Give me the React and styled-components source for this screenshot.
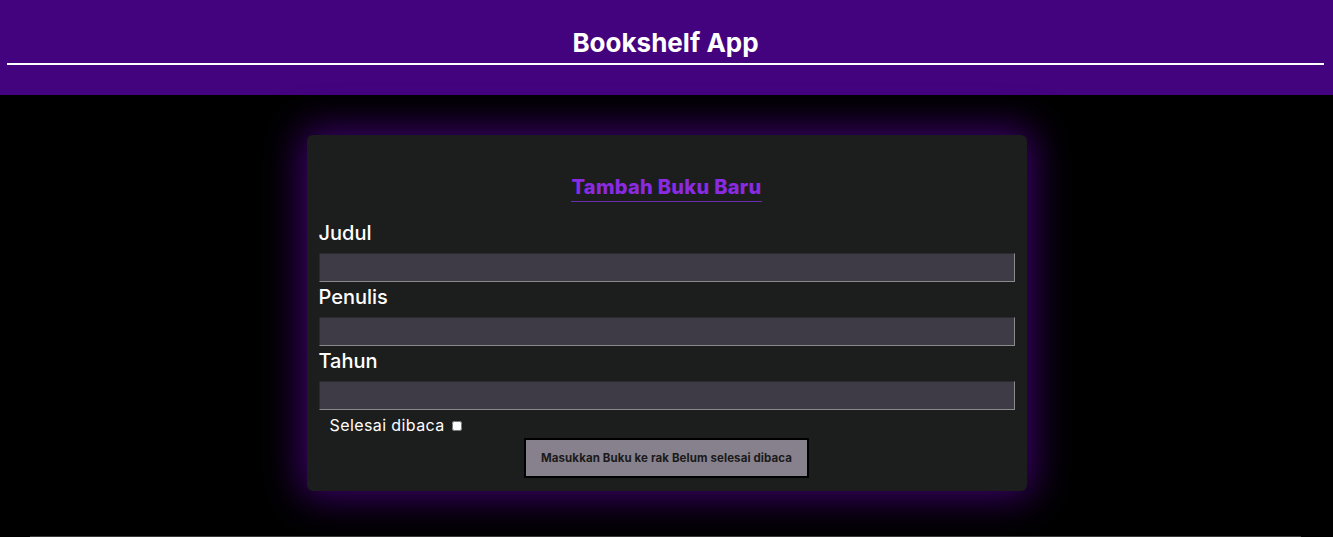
import styled, { createGlobalStyle } from "styled-components"

const GlobalStyle = createGlobalStyle`
   body {
      margin: 0;
      background: #000;
      font-family: "Inter", "Open Sans", sans-serif;
      color: #fff;
   }
`

const Header = styled.header`
   background: #44037e;
   padding: 26px 9px 30px 7px;
`
const Title = styled.h1`
   margin: 0;
   font-size: 26px;
   line-height: 34px;
   font-weight: 700;
   text-align: center;
   letter-spacing: 0;
   padding-bottom: 3px;
   border-bottom: 2px solid #fff;
`
const Main = styled.main`
   padding-top: 40px;
`
const Card = styled.section`
   width: 720px;
   margin: 0 auto;
   box-sizing: border-box;
   background: #1c1d1d;
   border-radius: 6px;
   padding: 39px 12px 13px;
   box-shadow: 0 0 38px 6px rgba(72, 0, 128, 0.85);
`
const CardHead = styled.div`
   text-align: center;
`
const CardTitle = styled.h2`
   display: inline-block;
   margin: 0;
   font-size: 20px;
   line-height: 26px;
   font-weight: 800;
   color: #8a2be2;
   letter-spacing: 0.3px;
   padding-bottom: 1px;
   border-bottom: 1px solid #6c2bb0;
`
const Form = styled.form`
   display: flex;
   flex-direction: column;
   margin-top: 19px;
`
const Label = styled.label`
   font-size: 20px;
   line-height: 24px;
   font-weight: 500;
   margin-bottom: 8px;
`
const Input = styled.input`
   box-sizing: border-box;
   width: 100%;
   height: 29px;
   margin: 0 0 3px;
   background: #3e3b46;
   border: 1px solid;
   border-color: #2b2b2e #8a8a8a #8a8a8a #2b2b2e;
   color: #fff;
   font-family: inherit;
`
const CheckRow = styled.div`
   display: flex;
   align-items: center;
   gap: 7px;
   padding-left: 11px;
   margin-top: 1px;
   font-size: 16px;
   line-height: 22px;
   letter-spacing: 0.4px;
`
const Check = styled.input`
   width: 10px;
   height: 10px;
   margin: 1px 0 0;
   accent-color: #fff;
`
const Button = styled.button`
   align-self: center;
   width: 285px;
   height: 40px;
   margin-top: 2px;
   background: #86818c;
   border: 2px solid #000;
   color: #1a1a1a;
   font-family: inherit;
   font-size: 11.5px;
   font-weight: 700;
   letter-spacing: 0.1px;
   cursor: pointer;
`
const Shelf = styled.section`
   margin: 45px 32px 0 30px;
   border-top: 1px solid #3a3a3a;
   height: 20px;
`

export default function App() {
   return (
      <>
         <GlobalStyle />
         <Header>
            <Title>Bookshelf App</Title>
         </Header>
         <Main>
            <Card>
               <CardHead>
                  <CardTitle>Tambah Buku Baru</CardTitle>
               </CardHead>
               <Form onSubmit={(e) => e.preventDefault()}>
                  <Label htmlFor="judul">Judul</Label>
                  <Input id="judul" type="text" />
                  <Label htmlFor="penulis">Penulis</Label>
                  <Input id="penulis" type="text" />
                  <Label htmlFor="tahun">Tahun</Label>
                  <Input id="tahun" type="number" />
                  <CheckRow>
                     <label htmlFor="selesai">Selesai dibaca</label>
                     <Check id="selesai" type="checkbox" />
                  </CheckRow>
                  <Button type="submit">Masukkan Buku ke rak Belum selesai dibaca</Button>
               </Form>
            </Card>
            <Shelf />
         </Main>
      </>
   )
}
